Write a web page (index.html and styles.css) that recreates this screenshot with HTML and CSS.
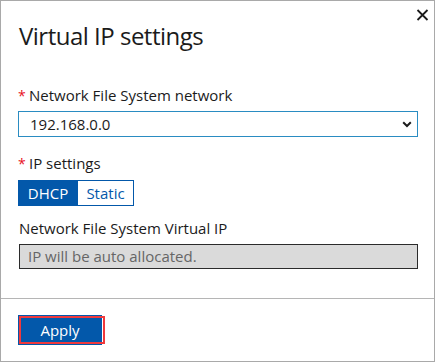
FILE: index.html
```html
<!DOCTYPE html>
<html lang="en">
<head>
<meta charset="utf-8">
<title>Virtual IP settings</title>
<link rel="stylesheet" href="styles.css">
</head>
<body>
<div class="dialog">
  <button class="close" aria-label="Close">
    <svg width="13" height="12" viewBox="0 0 13 12"><path d="M1.5 1 L11.5 11 M11.5 1 L1.5 11" stroke="#1b1b1b" stroke-width="1.8" fill="none"/></svg>
  </button>
  <div class="content">
    <h1 class="title">Virtual IP settings</h1>
    <div class="label label-first"><span class="req">*</span>Network File System network</div>
    <div class="select">
      <span class="select-value">192.168.0.0</span>
      <svg class="chev" width="10" height="7" viewBox="0 0 10 7"><path d="M1.2 1.3 L5 5 L8.8 1.3" stroke="#1b1b1b" stroke-width="2" fill="none"/></svg>
    </div>
    <div class="label label-gap"><span class="req">*</span>IP settings</div>
    <div class="segment">
      <span class="seg seg-on">DHCP</span>
      <span class="seg seg-off">Static</span>
    </div>
    <div class="label label-plain">Network File System Virtual IP</div>
    <div class="input">IP will be auto allocated.</div>
  </div>
  <div class="footer">
    <button class="apply">Apply</button>
  </div>
</div>
</body>
</html>
```

FILE: styles.css
```css
html, body {
  margin: 0;
  padding: 0;
  background: #ffffff;
}

body {
  font-family: "Open Sans", "Noto Sans", sans-serif;
  color: #1b1b1b;
}

.dialog {
  box-sizing: border-box;
  width: 435px;
  height: 362px;
  border: 1px solid #a9a9a9;
  position: relative;
  display: flex;
  flex-direction: column;
  background: #fff;
}

.close {
  position: absolute;
  top: 7px;
  right: 5px;
  width: 14px;
  height: 13px;
  padding: 0;
  border: 0;
  background: none;
  display: flex;
  align-items: center;
  justify-content: center;
}

.content {
  flex: 1;
  padding: 0 16px 0 17px;
}

.title {
  margin: 19px 0 0 1px;
  font-size: 24px;
  line-height: 32px;
  font-weight: 400;
  letter-spacing: -0.5px;
}

.label {
  font-size: 15px;
  line-height: 20px;
}

.label-first { margin-top: 33px; }
.label-gap { margin-top: 16px; }
.label-plain { margin-top: 12px; padding-left: 1px; }

.req {
  color: #e81123;
  display: inline-block;
  width: 11px;
  font-size: 14px;
}

.select {
  box-sizing: border-box;
  margin-top: 5px;
  width: 400px;
  height: 26px;
  border: 1px solid #2a8cc2;
  display: flex;
  align-items: center;
  justify-content: space-between;
  padding: 0 5px 0 11px;
  font-size: 15px;
}

.chev { display: block; margin-top: 1px; }

.segment {
  margin-top: 6px;
  display: flex;
  height: 26px;
}

.seg {
  box-sizing: border-box;
  height: 26px;
  display: flex;
  align-items: center;
  justify-content: center;
  font-size: 15px;
  border: 1px solid #0358aa;
}

.seg-on {
  width: 60px;
  background: #0358aa;
  color: #fff;
}

.seg-off {
  width: 56px;
  background: #fff;
  color: #0358aa;
  border-left: 0;
}

.input {
  box-sizing: border-box;
  margin: 6px 0 0 1px;
  width: 399px;
  height: 25px;
  border: 1px solid #2b2b2b;
  background: #dadada;
  color: #666;
  font-size: 15px;
  line-height: 23px;
  padding-left: 8px;
}

.footer {
  border-top: 1px solid #b5b5b5;
  height: 63px;
  box-sizing: border-box;
  padding: 16px 0 0 17px;
}

.apply {
  position: relative;
  box-sizing: border-box;
  width: 84px;
  height: 30px;
  border: 0;
  background: #0358aa;
  color: #fff;
  font-family: "Open Sans", "Noto Sans", sans-serif;
  font-size: 15px;
  padding: 0;
}

.apply::after {
  content: "";
  position: absolute;
  left: 1px;
  top: 1px;
  width: 86px;
  height: 28px;
  box-sizing: border-box;
  border: 2px solid #f0393c;
}
```
